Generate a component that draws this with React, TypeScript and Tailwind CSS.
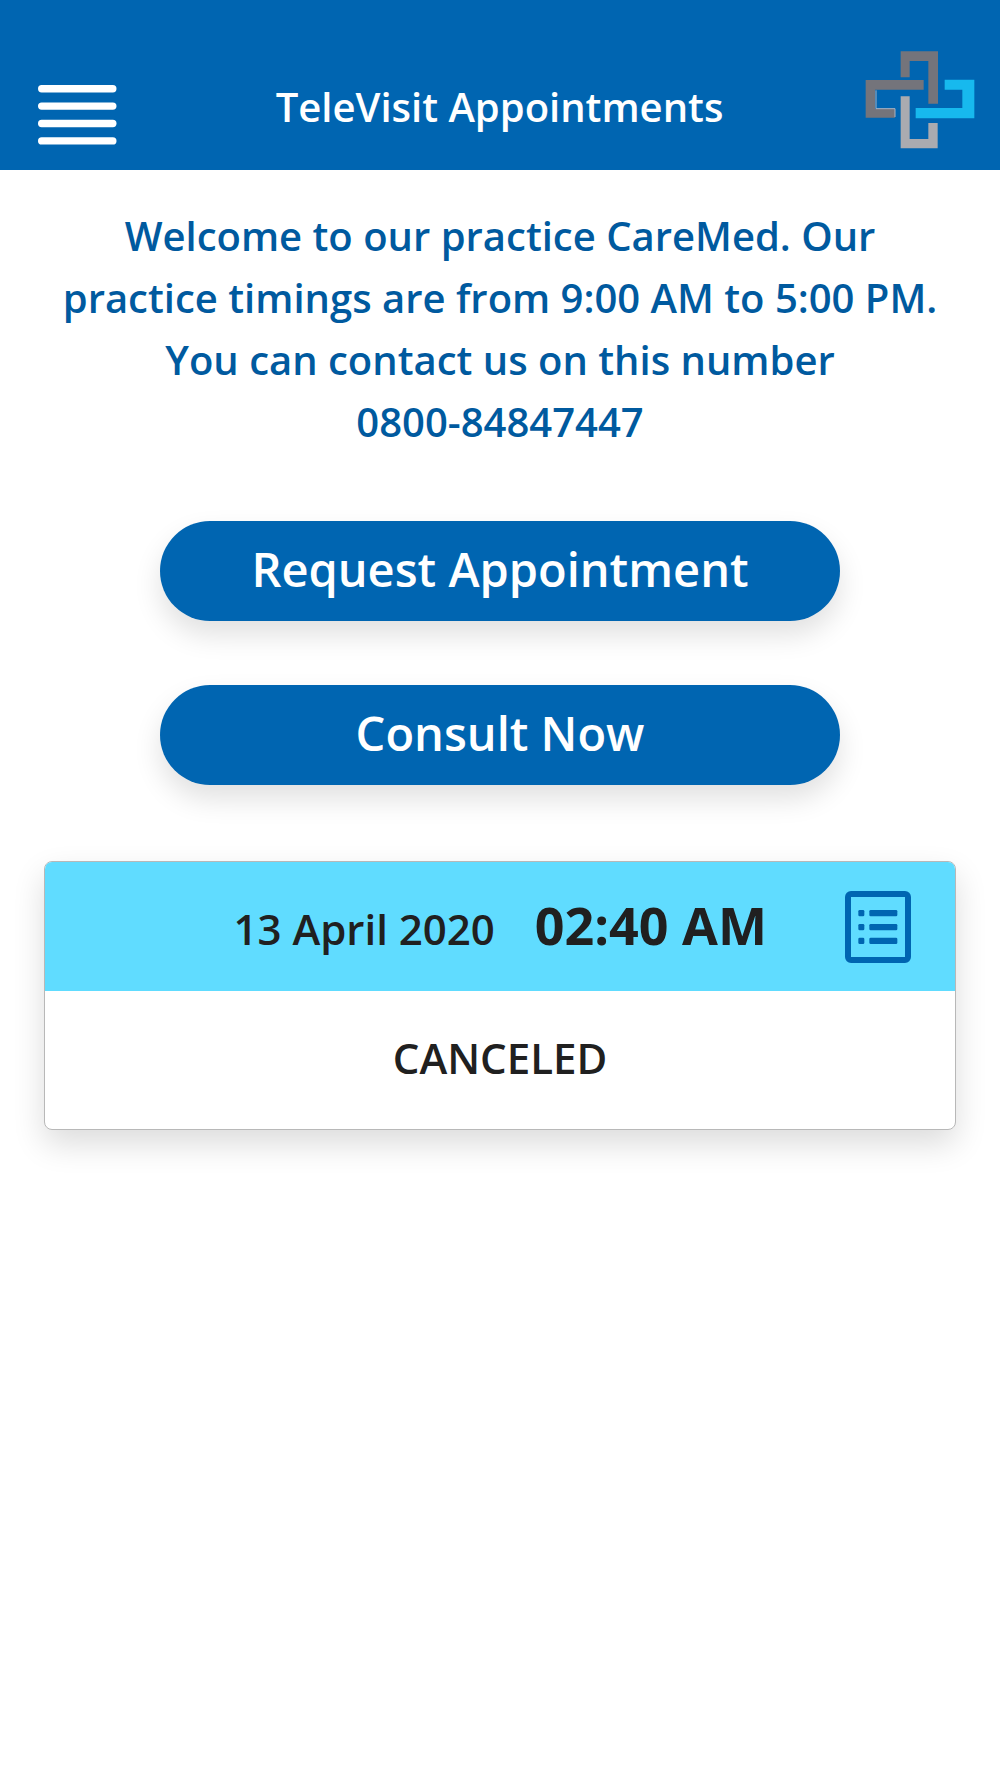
const appointments = [
  { id: 1, date: "13 April 2020", time: "02:40 AM", status: "CANCELED" },
];

function MenuIcon() {
  return (
    <svg width="79" height="60" viewBox="0 0 79 60" fill="white" aria-hidden="true">
      <rect x="0" y="0" width="78.5" height="7.4" rx="3.7" />
      <rect x="0" y="17.4" width="78.5" height="7.4" rx="3.7" />
      <rect x="0" y="34.8" width="78.5" height="7.4" rx="3.7" />
      <rect x="0" y="52.2" width="78.5" height="7.4" rx="3.7" />
    </svg>
  );
}

function CareMedLogo() {
  return (
    <svg width="110" height="98" viewBox="0 0 330 294" role="img" aria-label="CareMed">
      <path d="M107 1H219V158H190V30H134V79H107Z" fill="#74747b" />
      <path d="M2 87H176V116H30V173H90V200H2Z" fill="#74747b" />
      <path d="M33 118V173M33 173H90V198" fill="none" stroke="#a9b4c4" strokeWidth="3" />
      <path d="M239 86H328V202H152V171H292V116H239Z" fill="#17b9ee" />
      <path d="M107 136H134V264H190V216H218V292H107Z" fill="#aaabb0" />
    </svg>
  );
}

function DetailsIcon() {
  return (
    <svg width="66" height="72" viewBox="0 0 198 216" fill="#0065b1" aria-hidden="true">
      <rect x="9" y="9" width="180" height="198" rx="9" fill="none" stroke="#0065b1" strokeWidth="18" />
      {[57, 99, 140].map((y) => (
        <g key={y}>
          <rect x="40" y={y} width="18" height="19" rx="4" />
          <rect x="73" y={y} width="84" height="19" rx="4" />
        </g>
      ))}
    </svg>
  );
}

function ActionButton({ label }: { label: string }) {
  return (
    <button
      type="button"
      className="w-full h-[100px] pb-1 rounded-full bg-[#0065b1] text-white text-[47px] leading-[64px] font-semibold shadow-[0_14px_28px_rgba(0,0,0,0.12)]"
    >
      {label}
    </button>
  );
}

export default function App() {
  return (
    <div className="min-h-screen bg-white font-['Open_Sans',sans-serif] text-[#202020]">
      <header className="grid grid-cols-[80px_1fr_110px] items-end bg-[#0065b1] pt-[51px] pb-[21px] pl-[38px] pr-[25px]">
        <button type="button" aria-label="Open menu" className="pb-1">
          <MenuIcon />
        </button>
        <h1 className="text-center text-white text-[40px] leading-[56px] font-semibold whitespace-nowrap pb-[14px] pl-4">
          TeleVisit Appointments
        </h1>
        <CareMedLogo />
      </header>

      <main className="px-11 pt-[35px]">
        <p className="text-center text-[#005a9f] text-[40px] leading-[62px] font-semibold">
          Welcome to our practice CareMed. Our practice timings are from 9:00 AM to 5:00 PM. You can
          contact us on this number <span className="inline-block">0800-84847447</span>
        </p>

        <div className="mx-auto mt-[68px] w-3/4 px-[2px] flex flex-col gap-16">
          <ActionButton label="Request Appointment" />
          <ActionButton label="Consult Now" />
        </div>

        <div className="mt-[76px] flex flex-col gap-10">
          {appointments.map((a) => (
            <article
              key={a.id}
              className="rounded-lg border border-[#b8b8b8] bg-white overflow-hidden shadow-[0_14px_32px_rgba(0,0,0,0.14)]"
            >
              <div className="h-[129px] flex items-center justify-end bg-[#60dcff] pr-11">
                <div className="flex items-baseline gap-10">
                  <span className="text-[42px] leading-[64px] font-semibold">{a.date}</span>
                  <span className="text-[52px] leading-[64px] font-bold">{a.time}</span>
                </div>
                <button type="button" aria-label="Appointment details" className="ml-[78px]">
                  <DetailsIcon />
                </button>
              </div>
              <p className="h-[138px] pb-1 flex items-center justify-center text-[42px] leading-[64px] font-semibold">
                {a.status}
              </p>
            </article>
          ))}
        </div>
      </main>
    </div>
  );
}
